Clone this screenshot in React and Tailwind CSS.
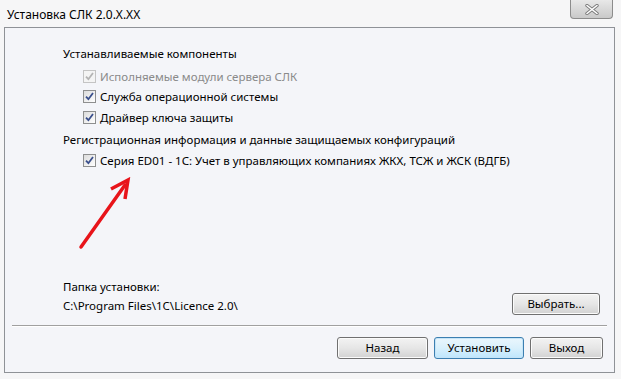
const FONT = { fontFamily: '"Noto Sans", "Open Sans", sans-serif' };

const Check = ({ disabled }) => (
  <span
    className={`flex h-[13px] w-[13px] shrink-0 items-center justify-center border ${
      disabled ? "border-[#c4c4c4] bg-[#f4f4f4]" : "border-[#8e8f8f] bg-linear-to-br from-[#dcdcdc] to-[#ffffff]"
    }`}
  >
    <svg width="9" height="9" viewBox="0 0 9 9">
      <path
        d="M1 4.6 L3.4 7.2 L8 1"
        fill="none"
        stroke={disabled ? "#b4b4b4" : "#3a4f8c"}
        strokeWidth="1.8"
      />
    </svg>
  </span>
);

const Row = ({ children, disabled }) => (
  <div className="flex h-[20.5px] items-center gap-[4px] pl-[20px]">
    <Check disabled={disabled} />
    <span className={disabled ? "text-[#8a8a8a]" : "text-black"}>{children}</span>
  </div>
);

const Button = ({ children, w, primary }) => (
  <button
    className={`flex h-[22px] items-center justify-center rounded-[3px] border text-[11.5px] text-black ${w} ${
      primary
        ? "border-[#3c7fb1] bg-linear-to-b from-[#eaf6fd] via-[#d9f0fc] to-[#bee6fd] shadow-[inset_0_0_0_1px_#c6e4f7]"
        : "border-[#707070] bg-linear-to-b from-[#f3f3f3] via-[#e6e6e6] to-[#d2d2d2] shadow-[inset_0_0_0_1px_#fbfbfb]"
    }`}
  >
    {children}
  </button>
);

export default function App() {
  return (
    <div className="flex h-[379px] w-[621px] flex-col bg-[#f6f6f7] text-[11.5px]" style={FONT}>
      {/* title bar */}
      <div className="flex h-[27px] shrink-0 items-start justify-between">
        <span className="pl-[7px] pt-[6px] text-[12px] text-black">Установка СЛК 2.0.X.XX</span>
        <div className="mr-[8px] flex h-[19px] w-[43px] items-center justify-center rounded-b-[4px] border border-t-0 border-[#8c8c8c] bg-linear-to-b from-[#e8e8e8] to-[#c9c9c9]">
          <svg width="14" height="11" viewBox="0 0 14 11">
            <path d="M2 1.5 L12 9.5 M12 1.5 L2 9.5" stroke="#7a7a7a" strokeWidth="3.4" strokeLinecap="round" />
            <path d="M2 1.5 L12 9.5 M12 1.5 L2 9.5" stroke="#ffffff" strokeWidth="1.6" strokeLinecap="round" />
          </svg>
        </div>
      </div>

      {/* client area */}
      <div className="relative ml-[4px] mr-[6px] flex h-[346px] flex-col border border-[#8f9297] bg-[#f4f5f9]">
        <div className="flex flex-1 flex-col pl-[58px] pt-[18px]">
          <div className="flex h-[16px] items-center">Устанавливаемые компоненты</div>
          <div className="mt-[4px] flex flex-col">
            <Row disabled>Исполняемые модули сервера СЛК</Row>
            <Row>Служба операционной системы</Row>
            <Row>Драйвер ключа защиты</Row>
          </div>
          <div className="mt-[4px] flex h-[16px] items-center">
            Регистрационная информация и данные защищаемых конфигураций
          </div>
          <div className="mt-[3px]">
            <Row>Серия ED01 - 1С: Учет в управляющих компаниях ЖКХ, ТСЖ и ЖСК (ВДГБ)</Row>
          </div>
        </div>

        {/* red annotation arrow */}
        <svg className="absolute left-[70px] top-[149px]" width="64" height="76" viewBox="0 0 64 76">
          <path d="M6 70 L50 8" stroke="#e8141a" strokeWidth="3.5" strokeLinecap="round" />
          <path d="M36 12 L53 3 L50 22" fill="none" stroke="#e8141a" strokeWidth="3.5" strokeLinejoin="miter" />
        </svg>

        {/* install folder */}
        <div className="flex items-end justify-between pl-[58px] pr-[14px]">
          <div className="flex flex-col leading-[19px]">
            <span>Папка установки:</span>
            <span>C:\Program Files\1C\Licence 2.0\</span>
          </div>
          <Button w="w-[88px]">Выбрать...</Button>
        </div>

        <div className="mx-[7px] mt-[10px] h-px bg-[#a0a0a0] shadow-[0_1px_0_#ffffff]" />

        <div className="flex justify-end gap-[6px] pb-[13px] pr-[11px] pt-[11px]">
          <Button w="w-[91px]">Назад</Button>
          <Button w="w-[90px]" primary>
            Установить
          </Button>
          <Button w="w-[73px]">Выход</Button>
        </div>
      </div>
    </div>
  );
}
